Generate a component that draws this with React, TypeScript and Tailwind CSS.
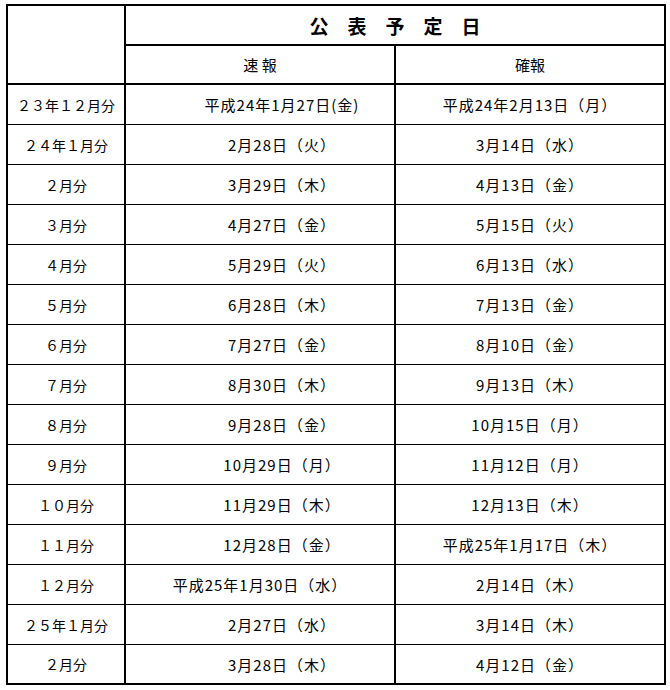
import React from 'react';

type Fila = { mes: string; sokuho: string; kakuho: string; pl?: boolean };

const filas: Fila[] = [
  { mes: '２３年１２月分', sokuho: '平成24年1月27日(金)', kakuho: '平成24年2月13日（月）', pl: true },
  { mes: '２４年１月分', sokuho: '2月28日（火）', kakuho: '3月14日（水）', pl: true },
  { mes: '２月分', sokuho: '3月29日（木）', kakuho: '4月13日（金）', pl: true },
  { mes: '３月分', sokuho: '4月27日（金）', kakuho: '5月15日（火）', pl: true },
  { mes: '４月分', sokuho: '5月29日（火）', kakuho: '6月13日（水）', pl: true },
  { mes: '５月分', sokuho: '6月28日（木）', kakuho: '7月13日（金）', pl: true },
  { mes: '６月分', sokuho: '7月27日（金）', kakuho: '8月10日（金）', pl: true },
  { mes: '７月分', sokuho: '8月30日（木）', kakuho: '9月13日（木）', pl: true },
  { mes: '８月分', sokuho: '9月28日（金）', kakuho: '10月15日（月）', pl: true },
  { mes: '９月分', sokuho: '10月29日（月）', kakuho: '11月12日（月）', pl: true },
  { mes: '１０月分', sokuho: '11月29日（木）', kakuho: '12月13日（木）', pl: true },
  { mes: '１１月分', sokuho: '12月28日（金）', kakuho: '平成25年1月17日（木）', pl: true },
  { mes: '１２月分', sokuho: '平成25年1月30日（水）', kakuho: '2月14日（木）' },
  { mes: '２５年１月分', sokuho: '2月27日（水）', kakuho: '3月14日（木）', pl: true },
  { mes: '２月分', sokuho: '3月28日（木）', kakuho: '4月12日（金）', pl: true },
];

export default function App() {
  return (
    <div
      className="min-h-screen bg-white text-black pt-[4px] pl-[6px]"
      style={{ fontFamily: '"Noto Sans CJK JP", "Noto Sans", sans-serif' }}
    >
      <div className="w-[660px] border-2 border-black text-[15px] leading-none">
        {/* cabecera */}
        <div className="flex h-[79px] border-b-2 border-black">
          <div className="w-[118px] border-r-2 border-black" />
          <div className="flex flex-1 flex-col">
            <div className="flex h-[40px] items-center justify-center border-b-2 border-black text-[19px] font-semibold">
              公　表　予　定　日
            </div>
            <div className="flex h-[37px]">
              <div className="flex w-[270px] items-center justify-center border-r-2 border-black">速 報</div>
              <div className="flex flex-1 items-center justify-center">確報</div>
            </div>
          </div>
        </div>

        {/* filas */}
        {filas.map((f, i) => {
          const ultima = i === filas.length - 1;
          return (
            <div
              key={i}
              className={ultima ? 'flex h-[38px]' : 'flex h-[40px] border-b border-black'}
            >
              <div className="flex w-[118px] items-center justify-center whitespace-nowrap border-r-2 border-black text-[14px]">
                {f.mes}
              </div>
              <div
                className={`flex w-[270px] items-center justify-center whitespace-nowrap border-r-2 border-black tracking-[1px] ${
                  f.pl ? 'pl-[44px]' : ''
                }`}
              >
                {f.sokuho}
              </div>
              <div className="flex flex-1 items-center justify-center whitespace-nowrap tracking-[1px]">
                {f.kakuho}
              </div>
            </div>
          );
        })}
      </div>
    </div>
  );
}
